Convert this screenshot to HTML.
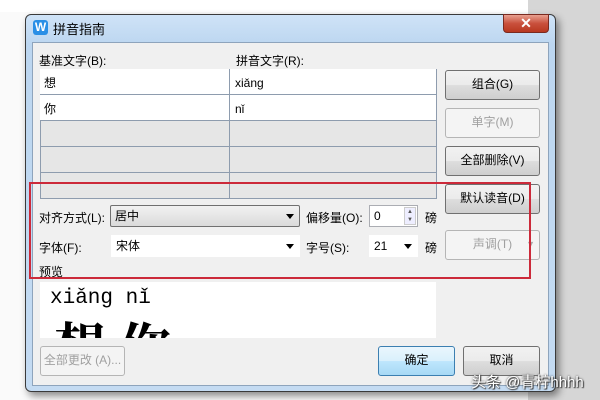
<!DOCTYPE html>
<html><head><meta charset="utf-8"><style>
*{margin:0;padding:0;box-sizing:border-box}
body{width:600px;height:400px;position:relative;overflow:hidden;background:#fafafa;font-family:"Liberation Sans","Noto Sans CJK SC",sans-serif;font-size:12px;color:#000}
.a{position:absolute}
.btn{position:absolute;border:1px solid #707070;border-radius:3px;background:linear-gradient(#f2f2f2,#ebebeb 50%,#dddddd 51%,#cfcfcf);text-align:center;font-size:12px;line-height:27px}
.dis{border-color:#b5b5b5;background:#f4f4f4;color:#a0a0a0}
.cell{position:absolute;border-right:1px solid #8e9cae;border-bottom:1px solid #8e9cae;line-height:14px}
.combo{position:absolute;border:1px solid #abadb3;background:#fff;height:22px;line-height:20px;padding-left:4px}
.arr{position:absolute;right:5px;top:8px;width:0;height:0;border-left:4px solid transparent;border-right:4px solid transparent;border-top:5px solid #000}
</style></head><body>
<div class="a" style="left:0;top:0;width:528px;height:12px;background:#fff"></div>
<div class="a" style="left:528px;top:0;width:72px;height:400px;background:#d6d6d6"></div>
<!-- window -->
<div class="a" style="left:25px;top:14px;width:531px;height:378px;border:1px solid #3a3a3a;border-radius:6px;background:linear-gradient(#cfe3f7,#bcd6f0 30px,#c4dbf2);box-shadow:3px 4px 8px rgba(0,0,0,.45)"></div>
<div class="a" style="left:33px;top:20px;width:15px;height:15px;border-radius:3px;background:#2a8fe6;color:#fff;font-size:12px;font-weight:bold;line-height:15px;text-align:center">W</div>
<div class="a" style="left:53px;top:19px;font-size:13px">拼音指南</div>
<div class="a" style="left:503px;top:14px;width:46px;height:19px;border:1px solid #7a2a20;border-radius:0 0 4px 4px;background:linear-gradient(#e8a090,#c9503c 50%,#b83820);color:#fff;font-weight:bold;font-size:14px;line-height:17px;text-align:center">✕</div>
<!-- client -->
<div class="a" style="left:32px;top:42px;width:517px;height:344px;background:#f0f0f0;border:1px solid #8ea4bc"></div>
<div class="a" style="left:39px;top:52px">基准文字(B):</div>
<div class="a" style="left:236px;top:52px">拼音文字(R):</div>
<div class="a" style="left:40px;top:69px;width:397px;height:130px;border:1px solid #8e9cae;border-right:none;border-bottom:none;background:#e6e6e6"></div>
<div class="cell" style="left:40px;top:69px;width:190px;height:26px;background:#fff;padding:7px 0 0 4px">想</div>
<div class="cell" style="left:230px;top:69px;width:207px;height:26px;background:#fff;padding:7px 0 0 5px">xiǎng</div>
<div class="cell" style="left:40px;top:95px;width:190px;height:26px;background:#fff;padding:7px 0 0 4px">你</div>
<div class="cell" style="left:230px;top:95px;width:207px;height:26px;background:#fff;padding:7px 0 0 5px">nǐ</div>
<div class="cell" style="left:40px;top:121px;width:190px;height:26px"></div>
<div class="cell" style="left:230px;top:121px;width:207px;height:26px"></div>
<div class="cell" style="left:40px;top:147px;width:190px;height:26px"></div>
<div class="cell" style="left:230px;top:147px;width:207px;height:26px"></div>
<div class="cell" style="left:40px;top:173px;width:190px;height:26px"></div>
<div class="cell" style="left:230px;top:173px;width:207px;height:26px"></div>
<div class="btn" style="left:445px;top:70px;width:95px;height:30px">组合(G)</div>
<div class="btn dis" style="left:445px;top:108px;width:95px;height:30px">单字(M)</div>
<div class="btn" style="left:445px;top:146px;width:95px;height:30px">全部删除(V)</div>
<div class="btn" style="left:445px;top:184px;width:95px;height:30px">默认读音(D)</div>
<!-- align row -->
<div class="a" style="left:39px;top:209px">对齐方式(L):</div>
<div class="combo" style="left:110px;top:205px;width:190px;background:linear-gradient(#f2f2f2,#dadada);border-color:#707070;border-radius:2px">居中<div class="arr"></div></div>
<div class="a" style="left:306px;top:209px">偏移量(O):</div>
<div class="combo" style="left:369px;top:205px;width:49px">0
<div class="a" style="right:1px;top:1px;width:12px;height:18px;border:1px solid #ccc;background:#eef;font-size:6px;line-height:8px;text-align:center;color:#555">▲<br>▼</div></div>
<div class="a" style="left:425px;top:209px">磅</div>
<!-- font row -->
<div class="a" style="left:39px;top:239px">字体(F):</div>
<div class="combo" style="left:111px;top:235px;width:189px;border-color:#fff">宋体<div class="arr"></div></div>
<div class="a" style="left:306px;top:239px">字号(S):</div>
<div class="combo" style="left:369px;top:235px;width:49px;border-color:#fff">21<div class="arr"></div></div>
<div class="a" style="left:425px;top:239px">磅</div>
<div class="btn dis" style="left:445px;top:230px;width:95px;height:30px">声调(T) <span style="position:absolute;right:4px;color:#aaa;font-size:9px">▼</span></div>
<div class="a" style="left:39px;top:263px">预览</div>
<!-- preview -->
<div class="a" style="left:40px;top:282px;width:396px;height:56px;background:#fff;overflow:hidden">
<div class="a" style="left:10px;top:5px;font-family:'Liberation Mono',monospace;font-size:21px">xiǎng nǐ</div>
<div class="a" style="left:14px;top:32px;font-family:'Noto Serif CJK SC','Noto Sans CJK SC',serif;font-size:52px;font-weight:bold;line-height:60px">想 你</div>
</div>
<div class="btn dis" style="left:40px;top:346px;width:85px;height:30px">全部更改 (A)...</div>
<div class="btn" style="left:378px;top:346px;width:77px;height:30px;border-color:#3c7fb1;background:linear-gradient(#eaf6fd,#d9f0fc 50%,#bee6fd 51%,#a7d9f5)">确定</div>
<div class="btn" style="left:463px;top:346px;width:77px;height:30px">取消</div>
<!-- red box -->
<div class="a" style="left:29px;top:182px;width:502px;height:97px;border:2px solid #cc2a3a"></div>
<div class="a" style="left:471px;top:371px;font-size:15px;color:#fff;text-shadow:0 0 2px #333,1px 1px 1px #333">头条 @青柠hhhh</div>
</body></html>
